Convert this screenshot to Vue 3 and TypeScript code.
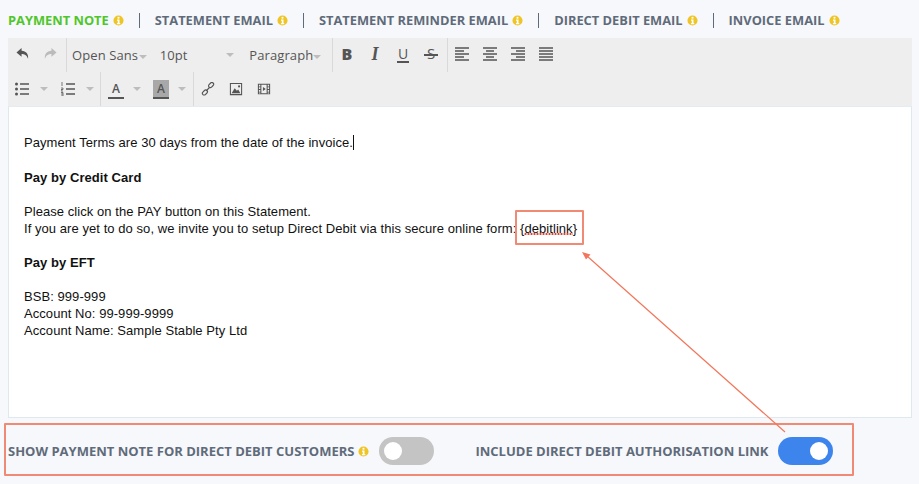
<script setup lang="ts">
const tabs = [
  { label: 'PAYMENT NOTE', active: true },
  { label: 'STATEMENT EMAIL', active: false },
  { label: 'STATEMENT REMINDER EMAIL', active: false },
  { label: 'DIRECT DEBIT EMAIL', active: false },
  { label: 'INVOICE EMAIL', active: false },
]
</script>

<template>
  <div class="page">
    <nav class="tabs">
      <template v-for="(t, i) in tabs" :key="t.label">
        <span v-if="i > 0" class="sep"></span>
        <span class="tab" :class="{ active: t.active }">{{ t.label }}</span>
        <svg class="info" viewBox="0 0 12 12"><circle cx="6" cy="6" r="5.500" fill="#eec525"/><rect x="5" y="2" width="2" height="2" fill="#fff"/><path d="M4.400 5h2.700v3.600h.8V10H4.300V8.600h.9V6.300h-.8z" fill="#fff"/></svg>
      </template>
    </nav>

    <section class="editor">
      <div class="toolbar">
        <div class="row row1">
          <div class="group g-hist">
            <svg class="ic" viewBox="0 0 14 14"><path d="M6 1 .5 5.800 6 10.500V7.600c3 0 5.300 1 7 5 .6-5.200-2-8.300-7-8.600z" fill="#555"/></svg>
            <svg class="ic" viewBox="0 0 14 14"><path d="M8 1l5.500 4.800L8 10.500V7.600c-3 0-5.300 1-7 5-.6-5.200 2-8.300 7-8.600z" fill="#bbb"/></svg>
          </div>
          <div class="group g-font">
            <span class="sel s1">Open Sans<i class="caret"></i></span>
            <span class="sel s2">10pt<i class="caret"></i></span>
            <span class="sel s3">Paragraph<i class="caret"></i></span>
          </div>
          <div class="group g-fmt">
            <span class="fmt b">B</span>
            <span class="fmt it">I</span>
            <span class="fmt u">U</span>
            <span class="fmt s">S</span>
          </div>
          <div class="group g-align">
            <svg class="al" viewBox="0 0 14 14"><path d="M0 1h14M0 4h9M0 7h14M0 10h9M0 13h14" stroke="#555" stroke-width="1.400"/></svg>
            <svg class="al" viewBox="0 0 14 14"><path d="M0 1h14M3 4h8M0 7h14M3 10h8M0 13h14" stroke="#555" stroke-width="1.400"/></svg>
            <svg class="al" viewBox="0 0 14 14"><path d="M0 1h14M5 4h9M0 7h14M5 10h9M0 13h14" stroke="#555" stroke-width="1.400"/></svg>
            <svg class="al" viewBox="0 0 14 14"><path d="M0 1h14M0 4h14M0 7h14M0 10h14M0 13h14" stroke="#555" stroke-width="1.400"/></svg>
          </div>
        </div>
        <div class="row row2">
          <div class="group g-list">
            <svg class="al bl" viewBox="0 0 14 14"><circle cx="1.500" cy="2" r="1.500" fill="#555"/><circle cx="1.500" cy="7" r="1.500" fill="#555"/><circle cx="1.500" cy="12" r="1.500" fill="#555"/><path d="M5 2h9M5 7h9M5 12h9" stroke="#555" stroke-width="1.400"/></svg>
            <i class="caret c-list"></i>
            <svg class="al bl" viewBox="0 0 14 14"><path d="M1 0v4M0 6h2v1.500H0V9h2M0 10.500h2V14H0M0 12h2" stroke="#555" stroke-width=".8" fill="none"/><path d="M5 2h9M5 7h9M5 12h9" stroke="#555" stroke-width="1.400"/></svg>
            <i class="caret c-list"></i>
          </div>
          <div class="group g-color">
            <span class="color">A</span>
            <i class="caret c-col"></i>
            <span class="color bg">A</span>
            <i class="caret c-col"></i>
          </div>
          <div class="group g-ins">
            <svg class="ins" viewBox="0 0 16 16" fill="none" stroke="#555" stroke-width="1.300"><rect x="8.300" y="1.500" width="6.500" height="4" rx="2" transform="rotate(-45 11.500 3.500)"/><rect x="1.200" y="10" width="6.500" height="4" rx="2" transform="rotate(-45 4.500 12)"/><path d="M6 10l4-4"/></svg>
            <svg class="ins" viewBox="0 0 16 14"><path fill="#555" fill-rule="evenodd" d="M1 0h14v14H1zm1.200 1.300v11.400h11.600V1.300z"/><path fill="#555" d="M3 11.800 6.500 6l2.500 3 1.500-1.500 2.500 4.300z"/><circle cx="11.500" cy="4" r="1.200" fill="#555"/></svg>
            <svg class="ins" viewBox="0 0 16 14"><path fill="#555" fill-rule="evenodd" d="M1 1h14v12H1zm1.200 1v2h1.600V2zm0 3v2h1.600V5zm0 3v2h1.600V8zm0 3v1h1.600v-1zM12.200 2v2h1.600V2zm0 3v2h1.600V5zm0 3v2h1.600V8zm0 3v1h1.600v-1zM5 2.200v9.600h6V2.200z"/><path fill="#555" d="M6.800 4.800 10 7 6.800 9.200z"/></svg>
          </div>
        </div>
      </div>
      <div class="content">
        <p class="first">Payment Terms are 30 days from the date of the invoice.<span class="cursor"></span></p>
        <p class="gap"><b>Pay by Credit Card</b></p>
        <p class="gap">Please click on the PAY button on this Statement.</p>
        <p>If you are yet to do so, we invite you to setup Direct Debit via this secure online form: {<span class="spell">debitlink</span>}</p>
        <p class="gap"><b>Pay by EFT</b></p>
        <p class="gap">BSB: 999-999</p>
        <p>Account No: 99-999-9999</p>
        <p>Account Name: Sample Stable Pty Ltd</p>
      </div>
    </section>

    <div class="options">
      <span class="opt-label">SHOW PAYMENT NOTE FOR DIRECT DEBIT CUSTOMERS</span>
      <svg class="info" viewBox="0 0 12 12"><circle cx="6" cy="6" r="5.500" fill="#eec525"/><rect x="5" y="2" width="2" height="2" fill="#fff"/><path d="M4.400 5h2.700v3.600h.8V10H4.300V8.600h.9V6.300h-.8z" fill="#fff"/></svg>
      <span class="toggle"><span class="knob"></span></span>
      <span class="opt-label second">INCLUDE DIRECT DEBIT AUTHORISATION LINK</span>
      <span class="toggle on"><span class="knob"></span></span>
    </div>

    <div class="mark mark-link"></div>
    <div class="mark mark-opts"></div>
    <svg class="arrow" viewBox="0 0 919 484">
      <path d="M785 432 587 256" stroke="#f2765a" stroke-width="1.200"/>
      <path d="M582 252l8.500 2.500-4.500 5z" fill="#f2765a"/>
    </svg>
  </div>
</template>

<style>
html, body { margin: 0; background: #f7f8fb; }
</style>

<style scoped>
.page {
  position: relative;
  width: 919px;
  height: 484px;
  overflow: hidden;
  background: #f7f8fb;
  font-family: "Open Sans", sans-serif;
  box-sizing: border-box;
  padding: 13px 7px 0 8px;
}
.tabs { display: flex; align-items: center; height: 15px; }
.tab { font-size: 12.850px; font-weight: 700; color: #5f6b7a; white-space: nowrap; line-height: 15px; }
.tab.active { color: #4fc62a; }
.info { width: 11px; height: 11px; margin-left: 4px; flex: none; }
.sep { width: 1px; height: 15px; background: #5f6b7a; margin: 0 15px; flex: none; }

.editor { margin-top: 10px; width: 904px; }
.toolbar { background: #eeeeee; height: 68px; color: #555; }
.row { display: flex; height: 34px; }
.group { display: flex; align-items: center; border-right: 1px solid #d9d9d9; box-sizing: border-box; height: 34px; }
.g-hist { width: 59px; padding-left: 8px; }
.ic { width: 13px; height: 13px; flex: none; margin-top: -3px; }
.ic + .ic { margin-left: 15px; }
.g-font { width: 266px; font-size: 13px; }
.sel { position: relative; display: block; letter-spacing: .1px; white-space: nowrap; }
.s1 { margin-left: 5px; width: 88px; }
.s2 { width: 90px; }
.s3 { width: 83px; }
.caret { display: inline-block; width: 0; height: 0; border: 4px solid transparent; border-top-color: #bdbdbd; border-bottom: 0; vertical-align: middle; flex: none; }
.s1 .caret { margin-left: 1px; }
.s2 .caret { position: absolute; left: 66px; top: 7px; }
.g-fmt { width: 115px; }
.fmt { position: relative; width: 28px; text-align: center; font-size: 16px; color: #555; line-height: 1; margin-top: -3px; }
.fmt.b { font-weight: 800; }
.fmt.it { font-family: "Liberation Serif", serif; font-style: italic; font-size: 18px; font-weight: 700; }
.fmt.u { font-size: 14px; }
.fmt.u::after { content: ""; position: absolute; left: 8px; right: 8px; bottom: -2px; height: 1.500px; background: #555; }
.fmt.s { font-size: 15px; }
.fmt.s::after { content: ""; position: absolute; left: 7px; right: 7px; top: 8px; height: 1.500px; background: #555; }
.g-align { border: 0; padding-left: 7px; gap: 14px; }
.al { width: 14px; height: 14px; flex: none; margin-top: -3px; }
.bl { margin-top: 0; }
.g-list { width: 93px; padding-left: 7px; }
.c-list { margin: 0 13px 0 11px; }
.g-color { width: 93px; padding-left: 7px; }
.color { width: 16px; height: 19px; border-bottom: 2px solid #555; font-size: 12px; font-weight: 600; text-align: center; line-height: 18px; box-sizing: border-box; flex: none; }
.color.bg { background: #a8a8a8; }
.c-col { margin: 0 12px 0 9px; }
.g-ins { border: 0; padding-left: 7px; gap: 14px; }
.ins { width: 14px; height: 14px; flex: none; margin-top: -1px; }

.content {
  height: 312px;
  background: #fff;
  border: 1px solid #dfe8ee;
  border-top-color: #e3ecf1;
  box-sizing: border-box;
  padding: 27.400px 15px 0;
  font-family: "Liberation Sans", Arial, sans-serif;
  font-size: 13px;
  letter-spacing: .06px;
  line-height: 17px;
  color: #111;
}
.content p { margin: 0; }
.content .gap { margin-top: 17.200px; }
.cursor { display: inline-block; width: 1px; height: 15px; background: #111; vertical-align: -3px; }
.spell {
  background: radial-gradient(circle, #e2402f 1px, transparent 1.200px) left bottom 1px / 3px 2px repeat-x;
}

.options { display: flex; align-items: center; height: 30px; margin-top: 18px; }
.opt-label { font-size: 13px; font-weight: 700; color: #5f6b7a; white-space: nowrap; }
.toggle { position: relative; display: block; width: 55px; height: 28px; border-radius: 14px; background: #c4c4c4; margin-left: 10px; flex: none; }
.toggle.on { background: #3d85ec; margin-left: 9px; }
.knob { position: absolute; top: 5px; left: 5px; width: 18px; height: 18px; border-radius: 50%; background: #fff; }
.on .knob { left: auto; right: 5px; }
.second { margin-left: 41px; }

.mark { position: absolute; border: 2px solid #f08a75; box-sizing: border-box; border-radius: 1px; }
.mark-link { left: 515px; top: 210px; width: 69px; height: 35px; }
.mark-opts { left: 4px; top: 423px; width: 850px; height: 53px; }
.arrow { position: absolute; inset: 0; width: 919px; height: 484px; pointer-events: none; }
</style>
